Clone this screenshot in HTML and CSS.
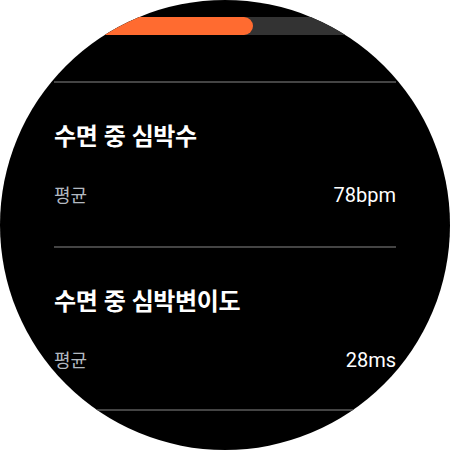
FILE: index.html
```html
<!DOCTYPE html>
<html lang="ko">
<head>
    <meta charset="UTF-8">
    <meta name="viewport" content="width=device-width, initial-scale=1.0">
    <title>수면 심박</title>
    <link rel="stylesheet" href="styles.css">
</head>
<body>

    <div class="watch">
        <div class="progress">
            <div class="progress-fill" style="width: 253px;"></div>
        </div>

        <div class="stat-list">
            <div class="stat">
                <h3>수면 중 심박수</h3>
                <div class="stat-row">
                    <span class="label">평균</span>
                    <span class="value">78bpm</span>
                </div>
            </div>

            <div class="stat">
                <h3>수면 중 심박변이도</h3>
                <div class="stat-row">
                    <span class="label">평균</span>
                    <span class="value">28ms</span>
                </div>
            </div>
        </div>
    </div>

</body>
</html>
```

FILE: styles.css
```css
* {
    margin: 0;
    padding: 0;
    box-sizing: border-box;
}

body {
    background: #fff;
    font-family: 'Noto Sans CJK KR', 'Noto Sans', sans-serif;
}

.watch {
    width: 450px;
    height: 450px;
    border-radius: 50%;
    background: #000;
    overflow: hidden;
    padding-top: 17px;
}

.progress {
    height: 18px;
    background: #333;
}

.progress-fill {
    height: 100%;
    background: #ff6b30;
    border-radius: 0 9px 9px 0;
}

.stat-list {
    margin-top: 46px;
    padding: 0 54px;
}

.stat {
    border-top: 2px solid #444;
    height: 165px;
    padding-top: 36px;
}

.stat h3 {
    color: #fff;
    font-size: 24px;
    font-weight: 700;
    letter-spacing: -0.4px;
    line-height: 32px;
}

.stat-row {
    display: flex;
    justify-content: space-between;
    align-items: baseline;
    margin-top: 29px;
    line-height: 28px;
}

.label {
    color: #b3b9c1;
    font-size: 18px;
}

.value {
    color: #fff;
    font-family: Roboto, 'Noto Sans', sans-serif;
    font-size: 20px;
}

.stat + .stat {
    border-bottom: 2px solid #444;
}
```
